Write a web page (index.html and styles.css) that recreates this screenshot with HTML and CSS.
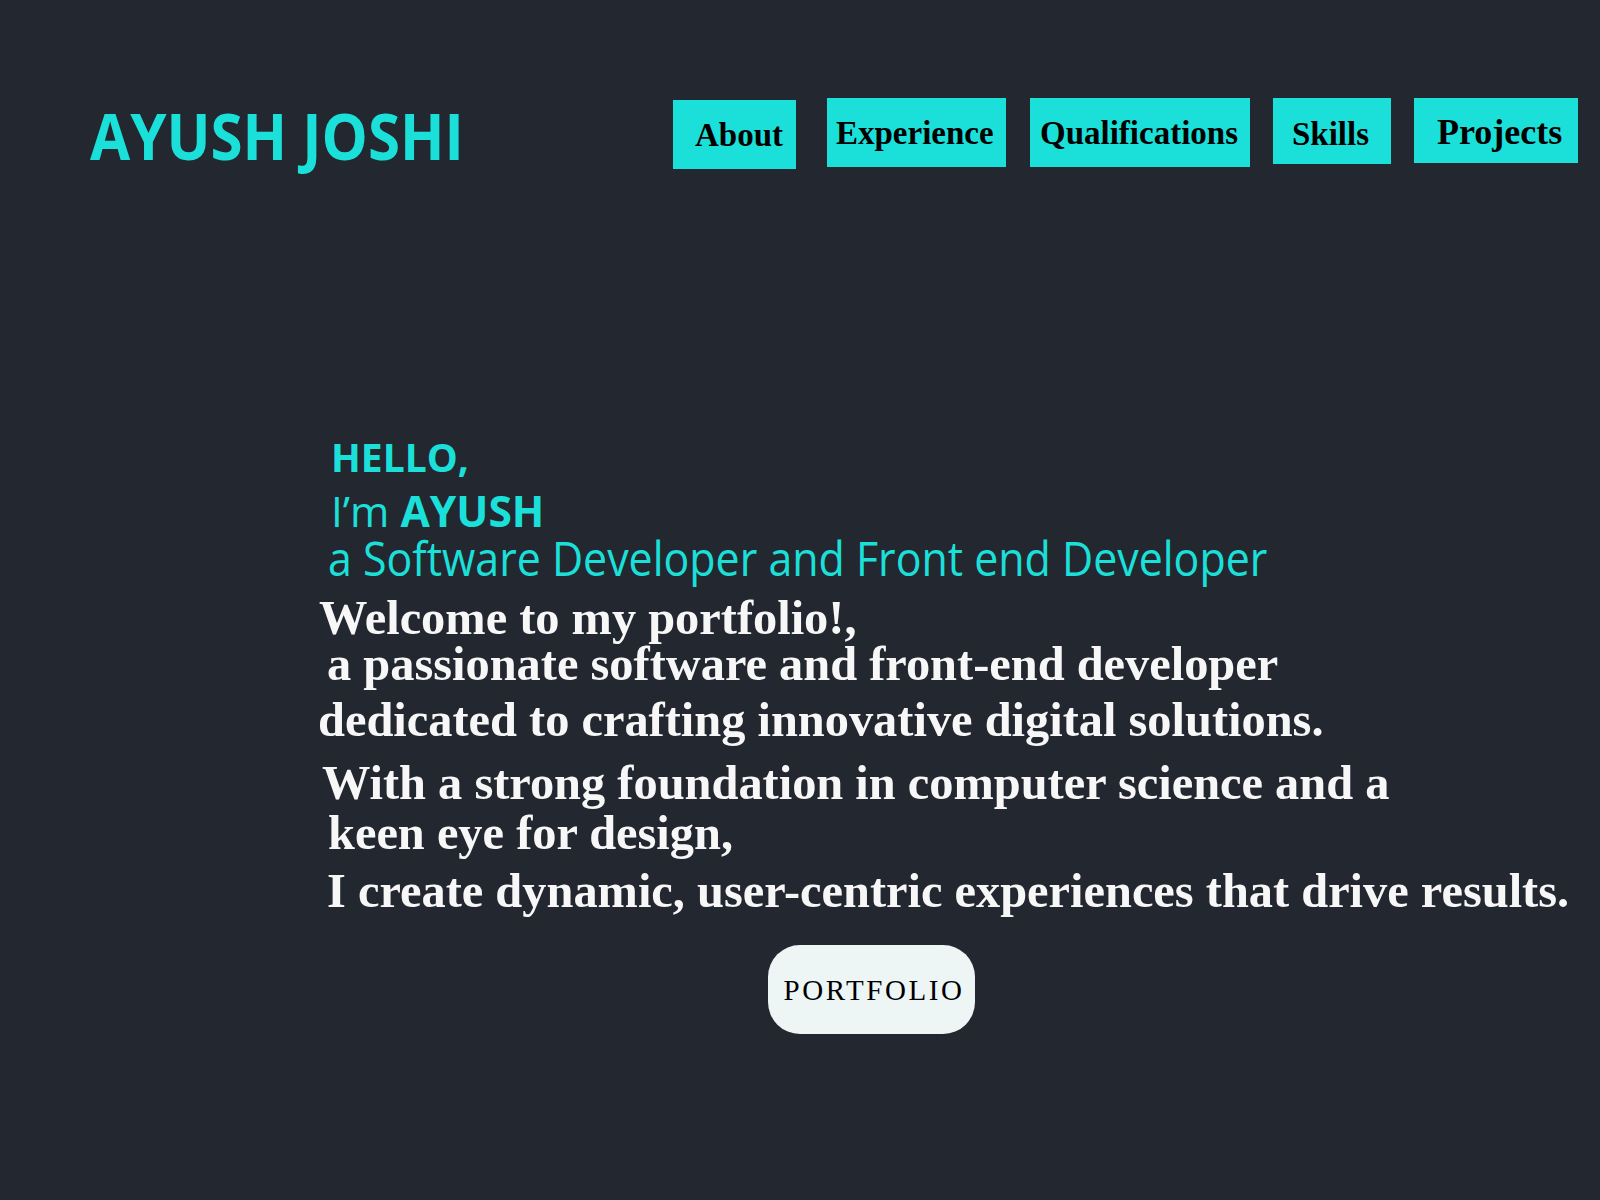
FILE: index.html
```html
<!DOCTYPE html>
<html lang="en">
<head>
<meta charset="utf-8">
<title>Ayush Joshi</title>
<link rel="stylesheet" href="styles.css">
</head>
<body>
<header class="header">
  <h1 class="brand">AYUSH JOSHI</h1>
  <nav class="nav">
    <a class="nav-link nav-about" href="#">About</a>
    <a class="nav-link nav-exp" href="#">Experience</a>
    <a class="nav-link nav-qual" href="#">Qualifications</a>
    <a class="nav-link nav-skills" href="#">Skills</a>
    <a class="nav-link nav-proj" href="#">Projects</a>
  </nav>
</header>
<main class="hero">
  <div class="hello">HELLO,</div>
  <div class="im">I’m <b>AYUSH</b></div>
  <div class="role">a Software Developer and Front end Developer</div>
  <div class="intro">
    <p class="line l1">Welcome to my portfolio!,</p>
    <p class="line l2">a passionate software and front-end developer</p>
    <p class="line l3">dedicated to crafting innovative digital solutions.</p>
    <p class="line l4">With a strong foundation in computer science and a</p>
    <p class="line l5">keen eye for design,</p>
    <p class="line l6">I create dynamic, user-centric experiences that drive results.</p>
  </div>
  <a class="portfolio-btn" href="#">PORTFOLIO</a>
</main>
</body>
</html>
```

FILE: styles.css
```css
html, body {
  margin: 0;
  padding: 0;
}
body {
  background: #232730;
  width: 1600px;
  min-height: 1200px;
  font-family: "Open Sans", "Liberation Sans", sans-serif;
}
.header {
  display: flex;
  align-items: flex-start;
  justify-content: space-between;
  padding: 98px 22px 0 90px;
}
.brand {
  margin: 6px 0 0 0;
  font-family: "Open Sans", sans-serif;
  font-weight: 700;
  font-size: 64px;
  line-height: 64px;
  color: #1be0da;
  white-space: nowrap;
  transform: scaleX(0.91);
  transform-origin: left center;
}
.nav {
  display: flex;
  align-items: flex-start;
}
.nav-link {
  display: block;
  box-sizing: border-box;
  background: #1be0da;
  color: #000;
  text-decoration: none;
  font-family: "Liberation Serif", "Times New Roman", serif;
  font-weight: 700;
  font-size: 33px;
  line-height: 33px;
  white-space: nowrap;
}
.nav-about {
  width: 123px;
  height: 69px;
  margin-top: 2px;
  padding: 19px 0 0 22px;
}
.nav-exp {
  width: 179px;
  height: 69px;
  margin-left: 31px;
  padding: 19px 0 0 9px;
}
.nav-qual {
  width: 220px;
  height: 69px;
  margin-left: 24px;
  padding: 19px 0 0 10px;
}
.nav-skills {
  width: 118px;
  height: 66px;
  margin-left: 23px;
  padding: 20px 0 0 19px;
}
.nav-proj {
  width: 164px;
  height: 65px;
  margin-left: 23px;
  padding: 16px 0 0 23px;
  font-size: 36px;
  line-height: 36px;
}
.hero {
  display: flex;
  flex-direction: column;
  align-items: flex-start;
  padding: 0 0 0 331px;
  margin-top: 268px;
  color: #1be0da;
}
.hello {
  font-weight: 700;
  font-size: 39px;
  line-height: 39px;
  white-space: nowrap;
}
.im {
  margin-top: 14px;
  font-size: 42.5px;
  line-height: 42px;
  white-space: nowrap;
}
.im b {
  font-weight: 700;
}
.role {
  margin-top: 3px;
  margin-left: -3px;
  font-size: 47px;
  line-height: 47px;
  white-space: nowrap;
  transform: scaleX(0.913);
  transform-origin: left center;
}
.intro {
  margin-top: 12px;
  margin-left: -2px;
  color: #f7f7f7;
  font-family: "Liberation Serif", "Times New Roman", serif;
  font-weight: 700;
  font-size: 48.4px;
  line-height: 48px;
}
.line {
  margin: 0;
  white-space: nowrap;
}
.l1 { margin-left: -10px; }
.l2 { margin-left: -2px; margin-top: -2px; }
.l3 { margin-left: -11px; margin-top: 8px; }
.l4 { margin-left: -7px; margin-top: 15px; }
.l5 { margin-left: -1px; margin-top: 2px; }
.l6 { margin-left: -2px; margin-top: 10px; }
.portfolio-btn {
  display: flex;
  align-items: center;
  justify-content: center;
  box-sizing: border-box;
  width: 207px;
  height: 89px;
  margin: 30px 0 0 437px;
  padding: 2px 0 0 5px;
  border-radius: 32px;
  background: #eef5f5;
  color: #000;
  text-decoration: none;
  font-family: "Liberation Serif", "Times New Roman", serif;
  font-size: 29px;
  letter-spacing: 2.6px;
}
```
